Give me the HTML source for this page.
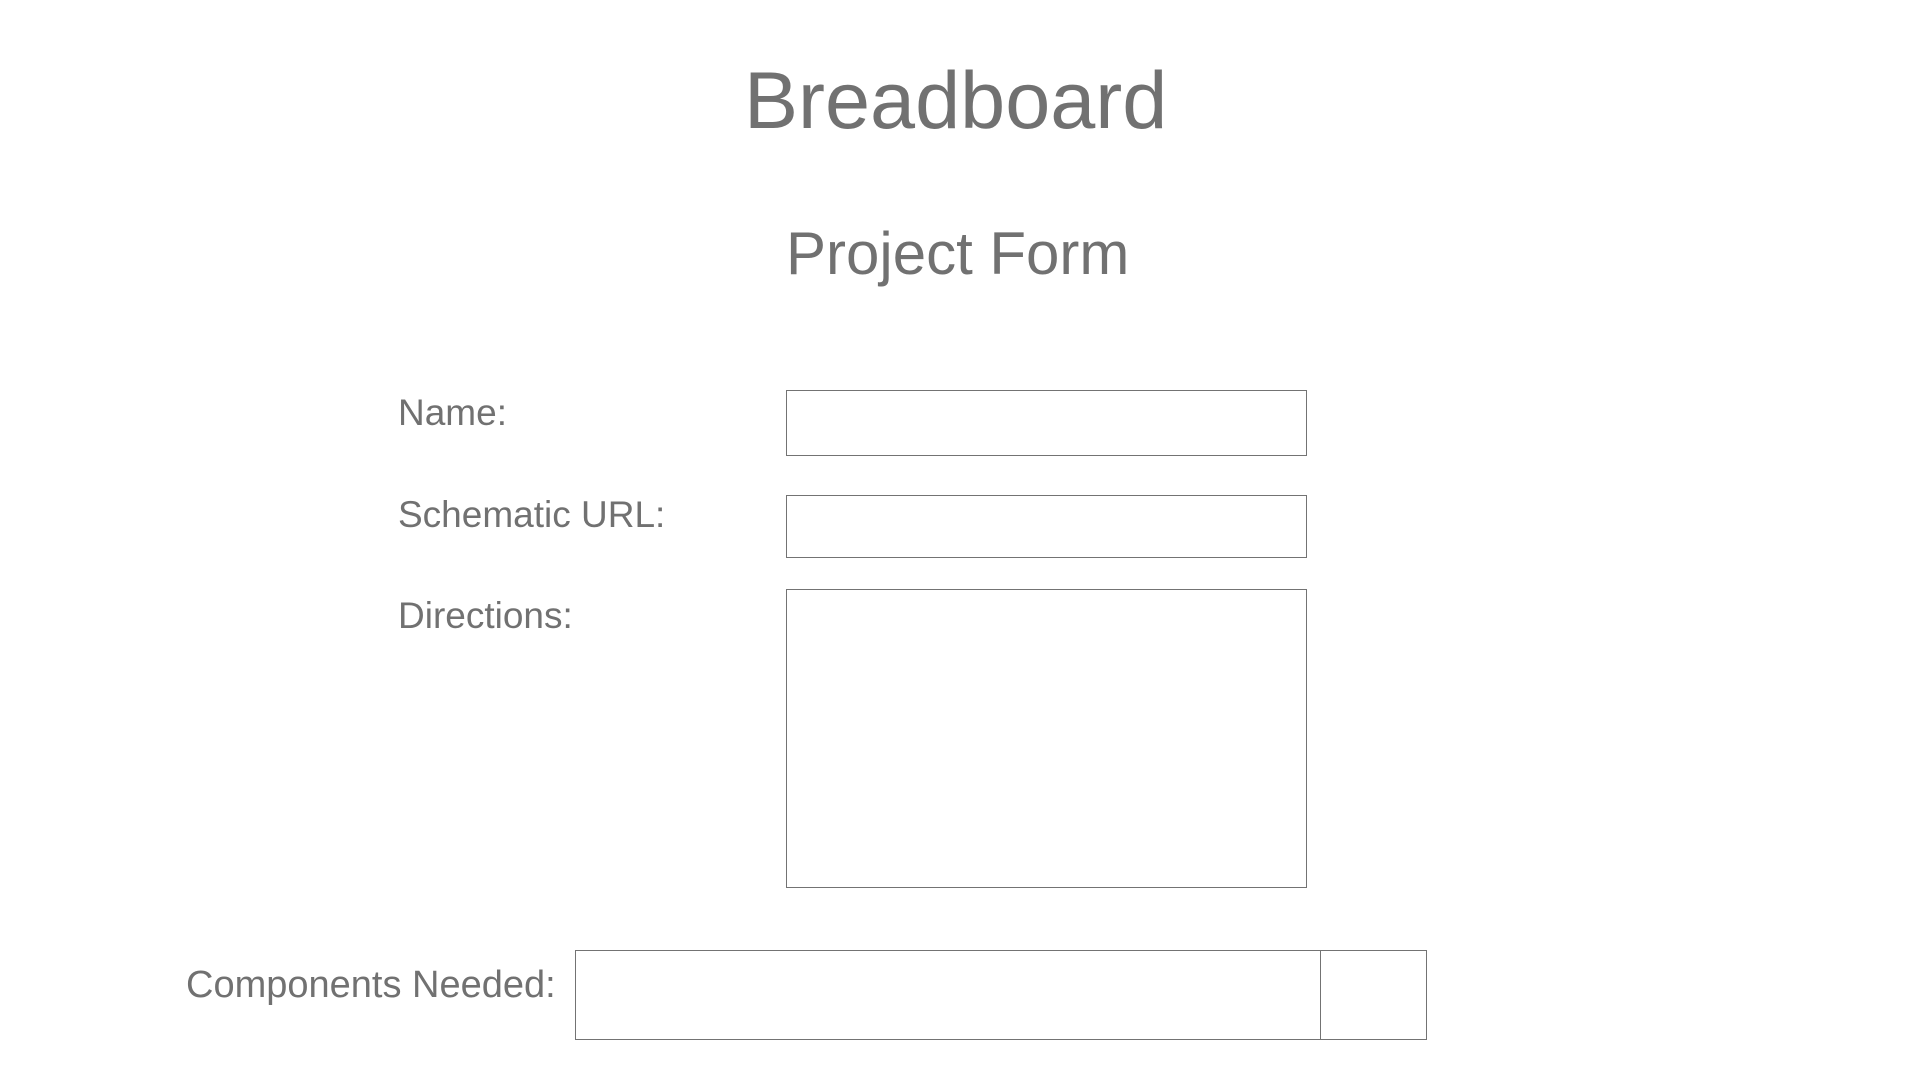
<!DOCTYPE html>
<html><head><meta charset="utf-8"><style>
html,body{margin:0;padding:0;background:#fff;width:1920px;height:1080px;overflow:hidden}
body{position:relative;font-family:"Liberation Sans",Arial,sans-serif;color:#717171}
.t{position:absolute;line-height:1;white-space:nowrap}
.b{position:absolute;border:1px solid #737373;box-sizing:border-box;background:#fff}
</style></head><body>
<div class="t" style="left:744px;top:61px;font-size:81px">Breadboard</div>
<div class="t" style="left:786px;top:224px;font-size:60px">Project Form</div>
<div class="t" style="left:398px;top:394px;font-size:37px">Name:</div>
<div class="t" style="left:398px;top:496px;font-size:37px">Schematic URL:</div>
<div class="t" style="left:398px;top:597px;font-size:37px">Directions:</div>
<div class="t" style="left:186px;top:966px;font-size:38px">Components Needed:</div>
<div class="b" style="left:786px;top:390px;width:521px;height:66px"></div>
<div class="b" style="left:786px;top:495px;width:521px;height:63px"></div>
<div class="b" style="left:786px;top:589px;width:521px;height:299px"></div>
<div class="b" style="left:575px;top:950px;width:852px;height:90px"></div>
<div style="position:absolute;left:1320px;top:950px;width:1px;height:90px;background:#737373"></div>
</body></html>
